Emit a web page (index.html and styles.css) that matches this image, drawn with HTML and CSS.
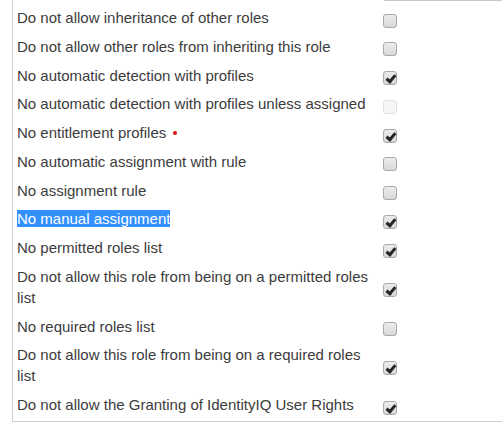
FILE: index.html
```html
<!DOCTYPE html>
<html>
<head>
<meta charset="utf-8">
<link rel="stylesheet" href="styles.css">
</head>
<body>
<div class="panel">
  <div class="topline"></div>
  <div class="rows">
    <div class="row"><div class="label">Do not allow inheritance of other roles</div><span class="cb"></span></div>
    <div class="row"><div class="label">Do not allow other roles from inheriting this role</div><span class="cb"></span></div>
    <div class="row"><div class="label">No automatic detection with profiles</div><span class="cb on"></span></div>
    <div class="row"><div class="label">No automatic detection with profiles unless assigned</div><span class="cb off"></span></div>
    <div class="row"><div class="label">No entitlement profiles <span class="req"></span></div><span class="cb on"></span></div>
    <div class="row"><div class="label">No automatic assignment with rule</div><span class="cb"></span></div>
    <div class="row"><div class="label">No assignment rule</div><span class="cb"></span></div>
    <div class="row"><div class="label"><span class="sel">No manual assignment</span></div><span class="cb on"></span></div>
    <div class="row"><div class="label">No permitted roles list</div><span class="cb on"></span></div>
    <div class="row"><div class="label">Do not allow this role from being on a permitted roles list</div><span class="cb on"></span></div>
    <div class="row"><div class="label">No required roles list</div><span class="cb"></span></div>
    <div class="row"><div class="label">Do not allow this role from being on a required roles list</div><span class="cb on"></span></div>
    <div class="row"><div class="label">Do not allow the Granting of IdentityIQ User Rights</div><span class="cb on"></span></div>
  </div>
</div>
</body>
</html>
```
FILE: styles.css
```css
html, body {
  margin: 0;
  padding: 0;
  background: #ffffff;
}
body {
  font-family: "Liberation Sans", Arial, sans-serif;
  font-size: 15px;
  color: #3c3c3c;
}
.panel {
  margin-left: 12px;
  width: 489px;
  border-left: 1px solid #cfcfcf;
  border-bottom: 1px solid #cfcfcf;
}
.topline {
  height: 1px;
  margin-left: 371px;
  background: #c8c8c8;
}
.rows {
  padding-top: 2px;
  padding-bottom: 2px;
}
.row {
  display: grid;
  grid-template-columns: 370px 14px;
  align-items: center;
  padding: 4px 0 3.75px;
}
.label {
  padding-left: 4px;
  padding-right: 10px;
  line-height: 21px;
}
.cb {
  display: block;
  box-sizing: border-box;
  width: 14px;
  height: 14px;
  margin-top: 6px;
  border: 1px solid #a9a9a9;
  border-radius: 3px;
  background: linear-gradient(#ececec, #d8d8d8);
  position: relative;
}
.cb.on::after {
  content: "";
  position: absolute;
  left: 4px;
  top: 1px;
  width: 3px;
  height: 7px;
  border: solid #262626;
  border-width: 0 3px 3px 0;
  transform: rotate(40deg);
}
.cb.off {
  border-color: #e2e2e2;
  background: #f6f6f6;
}
.req {
  display: inline-block;
  width: 4px;
  height: 4px;
  border-radius: 50%;
  background: #e01010;
  margin-left: 3px;
  vertical-align: 3px;
}
.sel {
  background: #3391ff;
  color: #ffffff;
}
```
